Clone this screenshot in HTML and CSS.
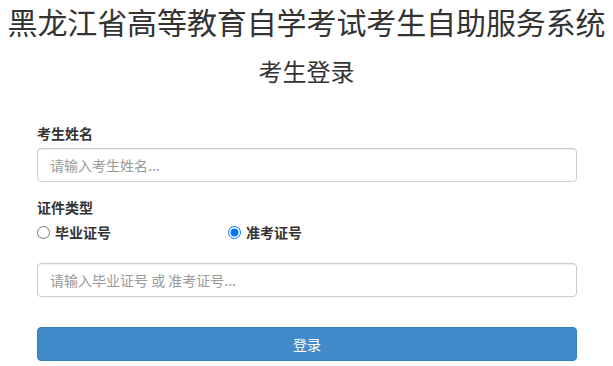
FILE: index.html
```html
<!DOCTYPE html>
<html lang="zh-CN">
<head>
<meta charset="utf-8">
<title>考生登录</title>
<link rel="stylesheet" href="styles.css">
</head>
<body>
<h1 class="title">黑龙江省高等教育自学考试考生自助服务系统</h1>
<h2 class="subtitle">考生登录</h2>
<form class="login-form">
  <div class="form-group">
    <label class="field-label" for="name">考生姓名</label>
    <input class="form-control" id="name" type="text" placeholder="请输入考生姓名...">
  </div>
  <div class="form-group">
    <label class="field-label">证件类型</label>
    <div class="radio-row">
      <label class="radio-option"><input type="radio" name="idtype" value="byzh">毕业证号</label>
      <label class="radio-option"><input type="radio" name="idtype" value="zkzh" checked>准考证号</label>
    </div>
  </div>
  <div class="form-group id-group">
    <input class="form-control" type="text" placeholder="请输入毕业证号 或 准考证号...">
  </div>
  <button class="btn-primary" type="button">登录</button>
</form>
</body>
</html>
```

FILE: styles.css
```css
* {
  box-sizing: border-box;
}
html, body {
  margin: 0;
  padding: 0;
  background: #fff;
}
body {
  font-family: "Noto Sans CJK SC", "Noto Sans", sans-serif;
  font-size: 14px;
  line-height: 20px;
  color: #333;
}
.title {
  margin: 0;
  padding-top: 2px;
  font-size: 30px;
  line-height: 39px;
  font-weight: normal;
  text-align: center;
  white-space: nowrap;
  letter-spacing: -0.1px;
}
.subtitle {
  margin: 17px 0 0;
  font-size: 24px;
  line-height: 26px;
  font-weight: normal;
  text-align: center;
}
.login-form {
  margin: 39px 36px 0 37px;
}
.form-group {
  margin-bottom: 15px;
}
.field-label {
  display: block;
  font-weight: bold;
  margin-bottom: 5px;
}
.form-control {
  display: block;
  width: 100%;
  height: 34px;
  padding: 6px 12px;
  font-family: inherit;
  font-size: 14px;
  color: #555;
  background: #fff;
  border: 1px solid #ccc;
  border-radius: 4px;
  box-shadow: inset 0 1px 1px rgba(0,0,0,.075);
  outline: none;
}
.form-control::placeholder {
  color: #999;
}
.radio-row {
  display: grid;
  grid-template-columns: 191px auto;
}
.radio-option {
  display: flex;
  align-items: center;
  font-weight: bold;
}
.radio-option input {
  margin: 0 5px 0 0;
  width: 13px;
  height: 13px;
}
.id-group {
  margin-top: 21px;
  margin-bottom: 30px;
}
.btn-primary {
  display: block;
  width: 100%;
  height: 34px;
  padding: 6px 12px;
  font-family: inherit;
  font-size: 14px;
  color: #fff;
  background: #428bca;
  border: 1px solid #357ebd;
  border-radius: 4px;
}
```
